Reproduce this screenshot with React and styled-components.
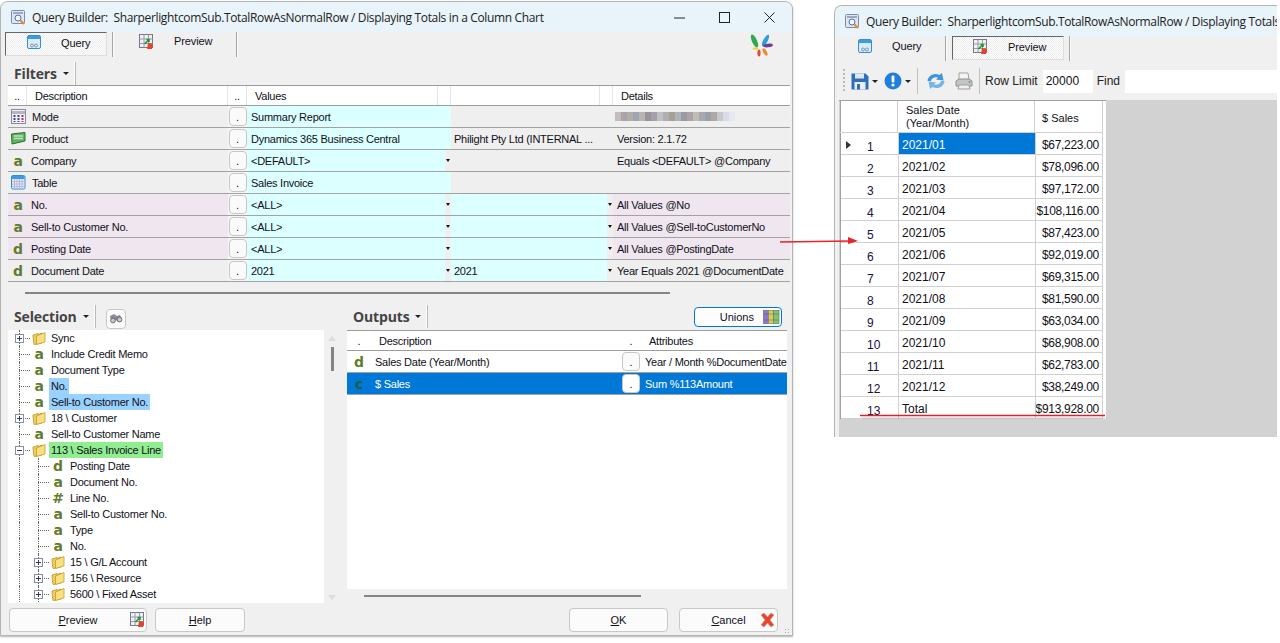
import styled, { createGlobalStyle } from "styled-components";

const GlobalStyle = createGlobalStyle`
  html, body {
    margin: 0;
    padding: 0;
    background: #fff;
    font-family: "Liberation Sans", Arial, sans-serif;
    font-size: 11px;
    letter-spacing: -0.25px;
    color: #101018;
  }
  svg {
    flex: none;
  }
`;

const Desktop = styled.div`
  position: relative;
  width: 1280px;
  height: 643px;
  overflow: hidden;
  background: #fff;
`;

const Window = styled.div`
  position: absolute;
  left: ${(p) => p.$left}px;
  top: ${(p) => p.$top}px;
  width: ${(p) => p.$width}px;
  height: ${(p) => p.$height}px;
  box-sizing: border-box;
  display: flex;
  flex-direction: column;
  overflow: hidden;
  background: #f0f0f0;
  border: 1px solid #b4b4b4;
  border-radius: 8px 8px 0 0;
  ${(p) =>
    p.$open
      ? "border-right: none; border-bottom: none; border-top-right-radius: 0;"
      : "box-shadow: 0 1px 2px rgba(0, 0, 0, 0.3);"}
`;

const TitleBar = styled.div`
  flex: none;
  height: 30px;
  display: flex;
  align-items: center;
  padding-left: 10px;
  background: #e8f4f9;
`;

const TitleText = styled.span`
  margin-left: 6px;
  font-family: "Open Sans", sans-serif;
  font-size: 12px;
  white-space: pre;
  color: #222;
  letter-spacing: -0.35px;
`;

const WindowControls = styled.div`
  margin-left: auto;
  display: flex;
  align-items: center;
  gap: 34px;
  padding-right: 17px;
`;

const TabStrip = styled.div`
  flex: none;
  height: 25px;
  display: flex;
  position: relative;
  padding-left: ${(p) => p.$pad}px;
`;

const Tab = styled.div`
  box-sizing: border-box;
  width: ${(p) => p.$width}px;
  height: 24px;
  display: flex;
  align-items: ${(p) => (p.$active ? "center" : "flex-start")};
  padding-left: ${(p) => p.$pad}px;
  padding-top: ${(p) => p.$top || 0}px;
  padding-bottom: ${(p) => (p.$active ? 4 : 0)}px;
  gap: ${(p) => p.$gap}px;
  ${(p) =>
    p.$active &&
    `
    border-top: 1px solid #666;
    border-left: 1px solid #666;
    border-right: 1px solid #ddd;
    border-bottom: 1px solid #ddd;
    background: repeating-conic-gradient(#fff 0 25%, #ececec 0 50%) 0 0 / 2px 2px;
  `}
`;

const TabLabel = styled.span`
  padding-top: ${(p) => (p.$active ? 2 : 1)}px;
  letter-spacing: -0.1px;
`;

const TabSep = styled.div`
  width: 1px;
  height: 25px;
  background: #a6a6a6;
  margin: 0 ${(p) => p.$right}px 0 ${(p) => p.$left}px;
  box-shadow: 1px 0 0 #fafafa;
`;

const LogoSlot = styled.div`
  position: absolute;
  right: 18px;
  top: 0;
`;

const SectionHeader = styled.div`
  flex: none;
  box-sizing: border-box;
  height: ${(p) => p.$height}px;
  margin-top: ${(p) => p.$top || 0}px;
  display: flex;
  align-items: center;
  padding-left: ${(p) => p.$pad || 13}px;
  padding-bottom: ${(p) => p.$lift || 0}px;
`;

const SectionTitle = styled.span`
  font-family: "Open Sans", sans-serif;
  font-size: 14px;
  font-weight: 700;
  letter-spacing: -0.15px;
  color: #444;
`;

const HeadCaret = styled.span`
  width: 0;
  height: 0;
  margin-left: 6px;
  border-left: 3px solid transparent;
  border-right: 3px solid transparent;
  border-top: 3px solid #222;
`;

const HeadSep = styled.span`
  width: 1px;
  height: 23px;
  margin-left: 6px;
  background: #b8b8b8;
  box-shadow: -1px 0 0 #fff;
`;

const FilterGrid = styled.div`
  flex: none;
  margin-left: 7px;
  width: 782px;
`;

const FilterHead = styled.div`
  display: grid;
  grid-template-columns: 19px 201px 19px 191px 13px 149px 13px 177px;
  height: 21px;
  box-sizing: border-box;
  border-top: 1px solid #9c9c9c;
  border-bottom: 1px solid #9c9c9c;
  background: #fff;
`;

const HeadCell = styled.div`
  box-sizing: border-box;
  display: flex;
  align-items: center;
  justify-content: ${(p) => (p.$center ? "center" : "flex-start")};
  padding-left: ${(p) => (p.$center ? 0 : 8)}px;
  border-right: 1px solid ${(p) => (p.$last ? "transparent" : "#e4e4e4")};
  white-space: nowrap;
  overflow: hidden;
`;

const FilterRow = styled.div`
  display: grid;
  grid-template-columns: 220px 19px 204px 162px 177px;
  height: 22px;
  box-sizing: border-box;
  border-bottom: 1px solid #a2a2a2;
  background: #efefef;
`;

const DescCell = styled.div`
  display: flex;
  align-items: center;
  padding-left: 3px;
  gap: 6px;
  background: ${(p) => (p.$pink ? "#f0e6f0" : "#efefef")};
  white-space: nowrap;
`;

const DotCell = styled.div`
  display: flex;
  justify-content: center;
  align-items: center;
  background: #f6f6f6;
`;

const DotButton = styled.div`
  box-sizing: border-box;
  width: 18px;
  height: 19px;
  display: flex;
  align-items: flex-end;
  justify-content: center;
  padding-bottom: 2px;
  line-height: 1;
  background: ${(p) => (p.$solid ? "#fff" : "#fafafa")};
  border: 1px solid #c6c6c6;
  border-radius: 4px;
`;

const ValueCell = styled.div`
  display: flex;
  align-items: center;
  padding-left: ${(p) => p.$pad}px;
  background: ${(p) => (p.$cyan ? "#dcffff" : "#efefef")};
  white-space: nowrap;
  overflow: hidden;
`;

const DropArrow = styled.span`
  align-self: stretch;
  margin-left: auto;
  width: 6px;
  display: flex;
  align-items: center;
  justify-content: center;
  background: #efefef;
  &::after {
    content: "";
    border-left: 2.5px solid transparent;
    border-right: 2.5px solid transparent;
    border-top: 3px solid #111;
  }
`;

const DetailCell = styled.div`
  display: flex;
  align-items: center;
  padding-left: 4px;
  background: ${(p) => (p.$pink ? "#f0e6f0" : "#efefef")};
  white-space: nowrap;
  overflow: hidden;
`;

const BlurStrip = styled.div`
  display: flex;
  margin-left: -2px;
`;

const BlurPixel = styled.span`
  width: 6px;
  height: 9px;
  background: ${(p) => p.$color};
`;

const TypeGlyph = styled.span`
  width: 14px;
  flex: none;
  text-align: center;
  font-family: "DejaVu Sans", sans-serif;
  font-weight: 700;
  font-size: 14px;
  line-height: 1;
  color: ${(p) => p.$color || "#5f7d2d"};
`;

const HLine = styled.div`
  flex: none;
  height: 2px;
  background: #858585;
  margin-left: ${(p) => p.$left}px;
  width: ${(p) => p.$width}px;
  margin-top: ${(p) => p.$top}px;
  margin-bottom: ${(p) => p.$bottom}px;
`;

const Panes = styled.div`
  flex: none;
  height: 302px;
  display: flex;
`;

const LeftPane = styled.div`
  flex: none;
  width: 346px;
  display: flex;
  flex-direction: column;
`;

const RightPane = styled.div`
  flex: none;
  width: 440px;
  display: flex;
  flex-direction: column;
`;

const TreeWrap = styled.div`
  display: flex;
  margin-left: 7px;
`;

const Tree = styled.div`
  box-sizing: border-box;
  width: 316px;
  height: 273px;
  padding-left: 2px;
  background: #fff;
  overflow: hidden;
`;

const TreeRow = styled.div`
  height: 16px;
  display: flex;
  align-items: center;
  white-space: nowrap;
`;

const Slot = styled.span`
  position: relative;
  flex: none;
  width: 19px;
  height: 16px;
  margin-right: ${(p) => (p.$end ? 3 : 0)}px;
  &::before {
    content: "";
    position: absolute;
    left: 9px;
    top: 0;
    bottom: 0;
    border-left: 1px dotted #666;
  }
  ${(p) =>
    p.$end &&
    `
    &::after {
      content: "";
      position: absolute;
      left: 9px;
      top: 8px;
      width: 11px;
      border-top: 1px dotted #666;
    }
  `}
`;

const Expander = styled.span`
  position: absolute;
  z-index: 1;
  left: 5px;
  top: 4px;
  width: 9px;
  height: 9px;
  box-sizing: border-box;
  border: 1px solid #8c8ca0;
  background: #fff;
  &::before {
    content: "";
    position: absolute;
    left: 1px;
    right: 1px;
    top: 3px;
    height: 1px;
    background: #2a3a80;
  }
  ${(p) =>
    p.$plus &&
    `
    &::after {
      content: "";
      position: absolute;
      top: 1px;
      bottom: 1px;
      left: 3px;
      width: 1px;
      background: #2a3a80;
    }
  `}
`;

const TreeLabel = styled.span`
  margin-left: 3px;
  padding: 0 2px;
  height: 16px;
  line-height: 16px;
  background: ${(p) => p.$hl || "transparent"};
`;

const TreeScroll = styled.div`
  flex: none;
  width: 16px;
  height: 272px;
  position: relative;
  display: flex;
  flex-direction: column;
  align-items: center;
  justify-content: space-between;
  padding: 6px 0 2px;
  box-sizing: border-box;
`;

const ScrollArrow = styled.span`
  border-left: 4px solid transparent;
  border-right: 4px solid transparent;
  ${(p) => (p.$up ? "border-bottom: 5px solid #dcdcdc;" : "border-top: 5px solid #dcdcdc;")}
`;

const ScrollThumb = styled.span`
  position: absolute;
  top: 17px;
  left: 7px;
  width: 3px;
  height: 24px;
  background: #858585;
`;

const BinocularButton = styled.div`
  box-sizing: border-box;
  width: 20px;
  height: 20px;
  margin-left: 10px;
  margin-top: 5px;
  display: flex;
  align-items: center;
  justify-content: center;
  background: #fbfbfb;
  border: 1px solid #c8c8c8;
  border-radius: 4px;
`;

const UnionsButton = styled.div`
  box-sizing: border-box;
  width: 88px;
  height: 20px;
  margin-left: auto;
  margin-right: 5px;
  display: flex;
  align-items: center;
  justify-content: flex-end;
  gap: 9px;
  padding-right: 1px;
  letter-spacing: 0;
  background: #fdfdfd;
  border: 1px solid #0078d7;
  border-radius: 4px;
`;

const OutputPanel = styled.div`
  height: 259px;
  background: #fff;
  overflow: hidden;
`;

const OutputHead = styled.div`
  display: grid;
  grid-template-columns: 24px 250px 20px 146px;
  height: 21px;
  box-sizing: border-box;
  border-top: 1px solid #9c9c9c;
  border-bottom: 1px solid #9c9c9c;
`;

const OutputRow = styled.div`
  display: grid;
  grid-template-columns: 24px 250px 20px 146px;
  height: 22px;
  box-sizing: border-box;
  border-bottom: 1px solid #a2a2a2;
  color: ${(p) => (p.$selected ? "#fff" : "inherit")};
  background: ${(p) => (p.$selected ? "#0078d7" : "#fff")};
`;

const OutputCell = styled.div`
  display: flex;
  align-items: center;
  justify-content: ${(p) => (p.$center ? "center" : "flex-start")};
  padding-left: ${(p) => p.$pad || 0}px;
  white-space: nowrap;
  overflow: hidden;
  color: ${(p) => p.$ink || "inherit"};
`;

const Footer = styled.div`
  flex: none;
  display: flex;
  padding: 0 14px 0 8px;
  position: relative;
  letter-spacing: 0;
`;

const FootButton = styled.div`
  box-sizing: border-box;
  position: relative;
  width: ${(p) => p.$width}px;
  height: 24px;
  margin-left: ${(p) => p.$gap || 0}px;
  display: flex;
  align-items: center;
  justify-content: center;
  background: #fbfbfb;
  border: 1px solid #c8c8c8;
  border-radius: 4px;
`;

const ButtonIcon = styled.span`
  position: absolute;
  right: ${(p) => p.$right}px;
  top: 3px;
  line-height: 0;
`;

const ResizeGrip = styled.span`
  position: absolute;
  right: 1px;
  bottom: -3px;
  width: 7px;
  height: 7px;
  background: radial-gradient(circle, #a8a8a8 1px, transparent 1px) 0 0 / 3px 3px;
`;

const Toolbar = styled.div`
  flex: none;
  height: 30px;
  margin-top: 5px;
  display: flex;
  align-items: center;
  padding-left: 8px;
  letter-spacing: 0;
`;

const ToolGrip = styled.span`
  width: 2px;
  height: 24px;
  margin-right: 6px;
  background: repeating-linear-gradient(#bbb 0 2px, transparent 2px 4px);
`;

const ToolCaret = styled.span`
  margin: 0 ${(p) => p.$right}px 0 3px;
  border-left: 3px solid transparent;
  border-right: 3px solid transparent;
  border-top: 3px solid #222;
`;

const ToolSep = styled.span`
  width: 1px;
  height: 26px;
  margin: 0 ${(p) => p.$right}px 0 ${(p) => p.$left}px;
  background: #c0c0c0;
`;

const ToolSpacer = styled.span`
  width: ${(p) => p.$width}px;
`;

const ToolText = styled.span`
  font-size: 12px;
  margin-right: ${(p) => p.$right}px;
  color: #222;
`;

const ToolInput = styled.div`
  box-sizing: border-box;
  height: 23px;
  width: ${(p) => p.$width}px;
  flex: ${(p) => (p.$grow ? 1 : "none")};
  margin-right: ${(p) => (p.$grow ? 0 : 4)}px;
  padding-left: 3px;
  display: flex;
  align-items: center;
  font-size: 12px;
  background: #fff;
`;

const GridArea = styled.div`
  flex: 1;
  margin-top: 4px;
  margin-left: 4px;
  background: #d2d2d2;
`;

const DataGrid = styled.div`
  width: 265px;
  background: #fff;
  border-left: 1px solid #a0a0a0;
  margin-left: 1px;
`;

const DataHead = styled.div`
  display: grid;
  grid-template-columns: 59px 137px 68px;
  height: 33px;
  box-sizing: border-box;
  border-top: 1px solid #a0a0a0;
  margin-left: -2px;
`;

const DataHeadCell = styled.div`
  box-sizing: border-box;
  display: flex;
  align-items: center;
  padding-left: ${(p) => p.$pad}px;
  padding-top: ${(p) => p.$down || 0}px;
  line-height: 13px;
  letter-spacing: 0;
  border-right: 1px solid #d0d0d0;
  border-bottom: 1px solid #d0d0d0;
`;

const DataRow = styled.div`
  display: grid;
  grid-template-columns: 58px 137px 67px;
  height: 22px;
  box-sizing: border-box;
`;

const RowHeader = styled.div`
  box-sizing: border-box;
  position: relative;
  padding: 8px 0 0 26px;
  line-height: 13px;
  letter-spacing: 0;
  border-right: 1px solid #d0d0d0;
  border-bottom: 1px solid #d0d0d0;
  font-size: 12px;
  color: #201040;
`;

const RowMarker = styled.span`
  position: absolute;
  left: 5px;
  top: 8px;
  border-top: 4px solid transparent;
  border-bottom: 4px solid transparent;
  border-left: 5px solid #333;
`;

const DataCell = styled.div`
  box-sizing: border-box;
  display: flex;
  align-items: center;
  justify-content: ${(p) => (p.$right ? "flex-end" : "flex-start")};
  padding: 2px 3px 0 3px;
  letter-spacing: ${(p) => (p.$right ? -0.3 : 0)}px;
  border-right: 1px solid #d0d0d0;
  border-bottom: 1px solid #d0d0d0;
  background: ${(p) => (p.$selected ? "#0078d7" : "#fff")};
  color: ${(p) => (p.$selected ? "#fff" : "inherit")};
  font-size: 12px;
`;

const Annotation = styled.svg`
  position: absolute;
  left: 0;
  top: 0;
  pointer-events: none;
`;

/* drawings */

const QueryAppIcon = () => (
  <svg width="15" height="15" viewBox="0 0 15 15">
    <rect x="0.5" y="0.5" width="13" height="13" rx="1" fill="#dfe6f2" stroke="#7f8aa8" />
    <rect x="2" y="2" width="10" height="2" fill="#9aa9c9" />
    <circle cx="7" cy="8" r="3" fill="#eef6ff" stroke="#5a6f9c" />
    <path d="M9.5 10.5 13 14" stroke="#e08a30" strokeWidth="2" />
  </svg>
);

const QueryTabIcon = () => (
  <svg width="15" height="15" viewBox="0 0 15 15">
    <rect x="0.5" y="0.5" width="13" height="13" rx="1.5" fill="#d8ecfb" stroke="#2f8fdc" />
    <rect x="1" y="1" width="12" height="3" fill="#3d9be3" />
    <circle cx="5" cy="10.500" r="1.500" fill="none" stroke="#7a95b0" />
    <circle cx="9" cy="10.500" r="1.500" fill="none" stroke="#7a95b0" />
  </svg>
);

const PreviewIcon = () => (
  <svg width="15" height="15" viewBox="0 0 15 15">
    <rect x="0.5" y="0.5" width="13" height="13" fill="#f0f0f4" stroke="#77778a" />
    <path d="M0.5 5h13M0.5 9.500h13M5 0.500v13M9.500 0.500v13" stroke="#9a9aaa" />
    <path d="M9 9l5 1-1 5H8z" fill="#e2452a" />
    <path d="M5.500 10 10 5.500M7.500 5.500H10V8" stroke="#1e9a2e" strokeWidth="1.600" fill="none" />
  </svg>
);

const ModeIcon = () => (
  <svg width="15" height="15" viewBox="0 0 15 15">
    <rect x="0.5" y="0.5" width="14" height="14" fill="#f2f2f6" stroke="#8a8a9c" />
    <path d="M1 3.500h13" stroke="#b4b4c4" strokeWidth="3" />
    <path d="M3.500 6v7M7.500 6v7" stroke="#3a4a8a" strokeWidth="2" strokeDasharray="2 1" />
    <path d="M11.500 6v7" stroke="#a03a5a" strokeWidth="2" strokeDasharray="2 1" />
  </svg>
);

const ProductIcon = () => (
  <svg width="15" height="15" viewBox="0 0 15 15">
    <path d="M0.500 3 14 1.500V10L1 13z" fill="#5cb85c" stroke="#2e6e2e" />
    <path d="M3 5h9M3 7.500h9" stroke="#c8d8c8" strokeWidth="1.400" />
  </svg>
);

const TableIcon = () => (
  <svg width="15" height="15" viewBox="0 0 15 15">
    <rect x="0.5" y="0.5" width="13.500" height="13.500" rx="1.500" fill="#e9e9f6" stroke="#2f8fdc" />
    <rect x="1" y="1" width="12.500" height="3" fill="#3d9be3" />
    <path d="M1 6.500h13M1 9h13M1 11.500h13M3.500 4v10M6 4v10M8.500 4v10M11 4v10" stroke="#b8b8d8" />
  </svg>
);

const FolderIcon = () => (
  <svg width="14" height="14" viewBox="0 0 14 14">
    <path d="M1 5 2 13.500 10 12V2L6 3.500V2.500L1 4z" fill="#f1cd5c" stroke="#b99628" strokeWidth="0.8" />
    <path d="M4.500 5 13 1.500V11L4.500 13.500z" fill="#f8df80" stroke="#c09c30" strokeWidth="0.8" />
  </svg>
);

const BinocularsIcon = () => (
  <svg width="14" height="12" viewBox="0 0 14 12">
    <path d="M1 3 5 1l3 2 3-1 2 4-3 3-3-2-2 2-3-1z" fill="#8c8c96" />
    <ellipse cx="4" cy="7.500" rx="2.400" ry="2.400" fill="#c8c8d0" stroke="#55555f" strokeWidth="0.8" />
    <ellipse cx="10.500" cy="6.500" rx="2.400" ry="2.400" fill="#c8c8d0" stroke="#55555f" strokeWidth="0.8" />
  </svg>
);

const UnionsIcon = () => (
  <svg width="17" height="15" viewBox="0 0 17 15">
    <rect x="0.5" y="1.500" width="5" height="13" fill="#8a78c8" stroke="#6a6a90" strokeWidth="0.7" />
    <rect x="5.500" y="1.500" width="5" height="13" fill="#d8c868" stroke="#8a8a50" strokeWidth="0.7" />
    <rect x="10.500" y="1.500" width="5.500" height="13" fill="#88c070" stroke="#5e8a50" strokeWidth="0.7" />
    <path d="M1 5h15M1 11h15" stroke="#4a4a4a" strokeWidth="0.6" opacity="0.6" />
  </svg>
);

const Logo = () => (
  <svg width="24" height="26" viewBox="0 0 24 26">
    <ellipse cx="4.500" cy="9" rx="2.500" ry="7" transform="rotate(-24 4.500 9)" fill="#2fa84f" />
    <ellipse cx="15.500" cy="8.500" rx="2.200" ry="6.500" transform="rotate(28 15.500 8.500)" fill="#2a9fd8" />
    <ellipse cx="18" cy="13.500" rx="5" ry="1.800" transform="rotate(-6 18 13.500)" fill="#6b3fa0" />
    <ellipse cx="15" cy="20" rx="1.800" ry="4" transform="rotate(-28 15 20)" fill="#f08a30" />
    <ellipse cx="9" cy="21" rx="1.600" ry="3.400" fill="#e8483c" />
    <ellipse cx="5.500" cy="16.500" rx="3" ry="1.300" fill="#f4d23c" />
  </svg>
);

const CloseRedIcon = () => (
  <svg width="15" height="16" viewBox="0 0 15 16">
    <path d="M1 3 4 1l3.500 4L11 1l3 2-4 5 4 5-3 2-3.500-4L4 15l-3-2 4-5z" fill="#e8452c" stroke="#c8a08c" strokeWidth="0.7" />
  </svg>
);

const SaveIcon = () => (
  <svg width="18" height="18" viewBox="0 0 18 18">
    <path d="M0.500 1.500h14l3 3v13H0.500z" fill="#2f6fb8" />
    <rect x="4" y="1.500" width="9" height="5" fill="#dfe8f4" />
    <rect x="3.500" y="10" width="11" height="7.500" fill="#e9eef6" />
    <rect x="6" y="12" width="3" height="5.500" fill="#2f6fb8" />
  </svg>
);

const InfoIcon = () => (
  <svg width="18" height="18" viewBox="0 0 18 18">
    <circle cx="9" cy="9" r="8.500" fill="#1f7fdc" />
    <rect x="7.600" y="3.500" width="2.800" height="7" rx="1" fill="#fff" />
    <circle cx="9" cy="13" r="1.600" fill="#fff" />
  </svg>
);

const RefreshIcon = () => (
  <svg width="18" height="18" viewBox="0 0 18 18">
    <path d="M0.500 9C1 3.500 7 0 12.500 3L15 1l1.500 7.500-7.500-1L11 5.500C8 4.500 4.500 6 4 9z" fill="#3f94dc" />
    <path d="M17.500 9C17 14.500 11 18 5.500 15L3 17 1.500 9.500l7.500 1L7 12.500c3 1 6.500-.5 7-3.500z" fill="#72b4e8" />
  </svg>
);

const PrintIcon = () => (
  <svg width="18" height="18" viewBox="0 0 18 18">
    <path d="M4 1h9l1 7H4z" fill="#f4f4f4" stroke="#a0a0a0" />
    <path d="M1 9l3-2h10l3 2v5H1z" fill="#c4c4c4" stroke="#909090" />
    <path d="M4 13h10l1 4H3z" fill="#eee" stroke="#a0a0a0" />
    <circle cx="14.500" cy="10" r="0.9" fill="#4ab04a" />
  </svg>
);

const Minimize = () => (
  <svg width="11" height="11" viewBox="0 0 11 11">
    <path d="M0 6h11" stroke="#222" />
  </svg>
);

const Maximize = () => (
  <svg width="11" height="11" viewBox="0 0 11 11">
    <rect x="0.5" y="0.5" width="10" height="10" fill="none" stroke="#222" />
  </svg>
);

const CloseX = () => (
  <svg width="11" height="11" viewBox="0 0 11 11">
    <path d="M0.500 0.500 10.500 10.500M10.500 0.500 0.500 10.500" stroke="#222" />
  </svg>
);

/* data */

const TITLE =
  "Query Builder:  SharperlightcomSub.TotalRowAsNormalRow / Displaying Totals in a Column Chart";

const filters = [
  { icon: <ModeIcon />, name: "Mode", value: "Summary Report", blur: true },
  {
    icon: <ProductIcon />,
    name: "Product",
    value: "Dynamics 365 Business Central",
    second: "Philight Pty Ltd (INTERNAL ...",
    details: "Version: 2.1.72",
  },
  {
    icon: <TypeGlyph>a</TypeGlyph>,
    name: "Company",
    value: "<DEFAULT>",
    drop: true,
    details: "Equals <DEFAULT> @Company",
  },
  { icon: <TableIcon />, name: "Table", value: "Sales Invoice" },
  {
    icon: <TypeGlyph>a</TypeGlyph>,
    name: "No.",
    value: "<ALL>",
    drop: true,
    pink: true,
    range: true,
    details: "All Values @No",
  },
  {
    icon: <TypeGlyph>a</TypeGlyph>,
    name: "Sell-to Customer No.",
    value: "<ALL>",
    drop: true,
    pink: true,
    range: true,
    details: "All Values @Sell-toCustomerNo",
  },
  {
    icon: <TypeGlyph>d</TypeGlyph>,
    name: "Posting Date",
    value: "<ALL>",
    drop: true,
    pink: true,
    range: true,
    details: "All Values @PostingDate",
  },
  {
    icon: <TypeGlyph>d</TypeGlyph>,
    name: "Document Date",
    value: "2021",
    drop: true,
    range: true,
    second: "2021",
    details: "Year Equals 2021 @DocumentDate",
  },
];

const blurColors = [
  "#c4bcbc", "#a8a4ac", "#b4aca8", "#a0a4b0", "#b8b4b4", "#98949c", "#a4a0a8",
  "#c0c0c4", "#b0b0b4", "#a8a098", "#b0b4b8", "#9c98a4", "#a8a4a8", "#c0bcb8",
  "#a8a8b0", "#98a0a8", "#b0a8a4", "#c8c8cc", "#d8dce8", "#e4e8f0",
];

const tree = [
  { level: 0, kind: "folder", label: "Sync", exp: "+" },
  { level: 0, kind: "a", label: "Include Credit Memo" },
  { level: 0, kind: "a", label: "Document Type" },
  { level: 0, kind: "a", label: "No.", hl: "#99d1ff" },
  { level: 0, kind: "a", label: "Sell-to Customer No.", hl: "#99d1ff" },
  { level: 0, kind: "folder", label: "18 \\ Customer", exp: "+" },
  { level: 0, kind: "a", label: "Sell-to Customer Name" },
  { level: 0, kind: "folder", label: "113 \\ Sales Invoice Line", exp: "-", hl: "#90ee90" },
  { level: 1, kind: "d", label: "Posting Date" },
  { level: 1, kind: "a", label: "Document No." },
  { level: 1, kind: "#", label: "Line No." },
  { level: 1, kind: "a", label: "Sell-to Customer No." },
  { level: 1, kind: "a", label: "Type" },
  { level: 1, kind: "a", label: "No." },
  { level: 1, kind: "folder", label: "15 \\ G/L Account", exp: "+" },
  { level: 1, kind: "folder", label: "156 \\ Resource", exp: "+" },
  { level: 1, kind: "folder", label: "5600 \\ Fixed Asset", exp: "+" },
];

const sales = [
  ["2021/01", "$67,223.00"],
  ["2021/02", "$78,096.00"],
  ["2021/03", "$97,172.00"],
  ["2021/04", "$108,116.00"],
  ["2021/05", "$87,423.00"],
  ["2021/06", "$92,019.00"],
  ["2021/07", "$69,315.00"],
  ["2021/08", "$81,590.00"],
  ["2021/09", "$63,034.00"],
  ["2021/10", "$68,908.00"],
  ["2021/11", "$62,783.00"],
  ["2021/12", "$38,249.00"],
  ["Total", "$913,928.00"],
];

function TreeItem({ item }) {
  const slots = [];
  for (let i = 0; i <= item.level; i++) {
    const end = i === item.level;
    slots.push(
      <Slot key={i} $end={end}>
        {end && item.exp && <Expander $plus={item.exp === "+"} />}
      </Slot>
    );
  }
  return (
    <TreeRow>
      {slots}
      {item.kind === "folder" ? <FolderIcon /> : <TypeGlyph>{item.kind}</TypeGlyph>}
      <TreeLabel $hl={item.hl}>{item.label}</TreeLabel>
    </TreeRow>
  );
}

function FilterLine({ row }) {
  return (
    <FilterRow>
      <DescCell $pink={row.pink}>
        {row.icon}
        {row.name}
      </DescCell>
      <DotCell>
        <DotButton>.</DotButton>
      </DotCell>
      <ValueCell $cyan $pad={4}>
        {row.value}
        {row.drop && <DropArrow />}
      </ValueCell>
      <ValueCell $cyan={row.range} $pad={3}>
        {row.second}
        {row.range && <DropArrow />}
      </ValueCell>
      <DetailCell $pink={row.pink}>
        {row.blur ? (
          <BlurStrip>
            {blurColors.map((c, i) => (
              <BlurPixel key={i} $color={c} />
            ))}
          </BlurStrip>
        ) : (
          row.details
        )}
      </DetailCell>
    </FilterRow>
  );
}

function QueryWindow() {
  return (
    <Window $left={0} $top={1} $width={793} $height={635}>
      <TitleBar>
        <QueryAppIcon />
        <TitleText>{TITLE}</TitleText>
        <WindowControls>
          <Minimize />
          <Maximize />
          <CloseX />
        </WindowControls>
      </TitleBar>
      <TabStrip $pad={4}>
        <Tab $active $width={102} $pad={21} $gap={19}>
          <QueryTabIcon />
          <TabLabel $active>Query</TabLabel>
        </Tab>
        <TabSep $left={5} $right={0} />
        <Tab $width={123} $pad={26} $gap={20} $top={2}>
          <PreviewIcon />
          <TabLabel>Preview</TabLabel>
        </Tab>
        <TabSep $left={0} $right={0} />
        <LogoSlot>
          <Logo />
        </LogoSlot>
      </TabStrip>
      <SectionHeader $top={5} $height={23}>
        <SectionTitle>Filters</SectionTitle>
        <HeadCaret />
        <HeadSep />
      </SectionHeader>
      <FilterGrid>
        <FilterHead>
          <HeadCell $center>..</HeadCell>
          <HeadCell>Description</HeadCell>
          <HeadCell $center>..</HeadCell>
          <HeadCell>Values</HeadCell>
          <HeadCell />
          <HeadCell />
          <HeadCell />
          <HeadCell $last>Details</HeadCell>
        </FilterHead>
        {filters.map((row) => (
          <FilterLine key={row.name} row={row} />
        ))}
      </FilterGrid>
      <HLine $left={24} $width={645} $top={10} $bottom={12} />
      <Panes>
        <LeftPane>
          <SectionHeader $height={24} $lift={3}>
            <SectionTitle>Selection</SectionTitle>
            <HeadCaret />
            <HeadSep />
            <BinocularButton>
              <BinocularsIcon />
            </BinocularButton>
          </SectionHeader>
          <TreeWrap>
            <Tree>
              {tree.map((item, i) => (
                <TreeItem key={i} item={item} />
              ))}
            </Tree>
            <TreeScroll>
              <ScrollArrow $up />
              <ScrollThumb />
              <ScrollArrow />
            </TreeScroll>
          </TreeWrap>
        </LeftPane>
        <RightPane>
          <SectionHeader $height={24} $lift={3} $pad={6}>
            <SectionTitle>Outputs</SectionTitle>
            <HeadCaret />
            <HeadSep />
            <UnionsButton>
              Unions
              <UnionsIcon />
            </UnionsButton>
          </SectionHeader>
          <OutputPanel>
            <OutputHead>
              <OutputCell $center>.</OutputCell>
              <OutputCell $pad={8}>Description</OutputCell>
              <OutputCell $center>.</OutputCell>
              <OutputCell $pad={8}>Attributes</OutputCell>
            </OutputHead>
            <OutputRow>
              <OutputCell $center>
                <TypeGlyph>d</TypeGlyph>
              </OutputCell>
              <OutputCell $pad={4}>Sales Date (Year/Month)</OutputCell>
              <OutputCell $center>
                <DotButton>.</DotButton>
              </OutputCell>
              <OutputCell $pad={4}>Year / Month %DocumentDate</OutputCell>
            </OutputRow>
            <OutputRow $selected>
              <OutputCell $center>
                <TypeGlyph $color="#1f5f45">c</TypeGlyph>
              </OutputCell>
              <OutputCell $pad={4}>$ Sales</OutputCell>
              <OutputCell $center $ink="#111">
                <DotButton $solid>.</DotButton>
              </OutputCell>
              <OutputCell $pad={4}>Sum %113Amount</OutputCell>
            </OutputRow>
          </OutputPanel>
          <HLine $left={17} $width={277} $top={6} $bottom={0} />
        </RightPane>
      </Panes>
      <Footer>
        <FootButton $width={138}>
          <span>
            <u>P</u>review
          </span>
          <ButtonIcon $right={1}>
            <PreviewIcon />
          </ButtonIcon>
        </FootButton>
        <FootButton $width={90} $gap={8}>
          <span>
            <u>H</u>elp
          </span>
        </FootButton>
        <FootButton $width={99} $gap={324}>
          <span>
            <u>O</u>K
          </span>
        </FootButton>
        <FootButton $width={99} $gap={11}>
          <span>
            <u>C</u>ancel
          </span>
          <ButtonIcon $right={2}>
            <CloseRedIcon />
          </ButtonIcon>
        </FootButton>
        <ResizeGrip />
      </Footer>
    </Window>
  );
}

function PreviewWindow() {
  return (
    <Window $open $left={834} $top={5} $width={443} $height={432}>
      <TitleBar>
        <QueryAppIcon />
        <TitleText>{TITLE}</TitleText>
      </TitleBar>
      <TabStrip $pad={5}>
        <Tab $width={105} $pad={18} $gap={19} $top={3}>
          <QueryTabIcon />
          <TabLabel>Query</TabLabel>
        </Tab>
        <TabSep $left={0} $right={6} />
        <Tab $active $width={112} $pad={20} $gap={20}>
          <PreviewIcon />
          <TabLabel $active>Preview</TabLabel>
        </Tab>
        <TabSep $left={5} $right={0} />
      </TabStrip>
      <Toolbar>
        <ToolGrip />
        <SaveIcon />
        <ToolCaret $right={6} />
        <InfoIcon />
        <ToolCaret $right={0} />
        <ToolSep $left={6} $right={9} />
        <RefreshIcon />
        <ToolSpacer $width={10} />
        <PrintIcon />
        <ToolSep $left={6} $right={5} />
        <ToolText $right={5}>Row Limit</ToolText>
        <ToolInput $width={50}>20000</ToolInput>
        <ToolText $right={5}>Find</ToolText>
        <ToolInput $grow />
      </Toolbar>
      <GridArea>
        <DataGrid>
          <DataHead>
            <DataHeadCell $pad={0} />
            <DataHeadCell $pad={8}>
              Sales Date
              <br />
              (Year/Month)
            </DataHeadCell>
            <DataHeadCell $pad={7} $down={3}>
              $ Sales
            </DataHeadCell>
          </DataHead>
          {sales.map(([label, amount], i) => (
            <DataRow key={label}>
              <RowHeader>
                {i === 0 && <RowMarker />}
                {i + 1}
              </RowHeader>
              <DataCell $selected={i === 0}>{label}</DataCell>
              <DataCell $right>{amount}</DataCell>
            </DataRow>
          ))}
        </DataGrid>
      </GridArea>
    </Window>
  );
}

export default function App() {
  return (
    <Desktop>
      <GlobalStyle />
      <QueryWindow />
      <PreviewWindow />
      <Annotation width="1280" height="643">
        <path d="M780 242 L850 241" stroke="#e8232a" strokeWidth="1.5" />
        <path d="M848 237 L858 241 L848 244z" fill="#e8232a" />
        <path d="M860 415.500 L1105 415.500" stroke="#d8232a" strokeWidth="1.5" />
        <path d="M862 418 L1107 418" stroke="#888" strokeWidth="1" opacity="0.35" />
      </Annotation>
    </Desktop>
  );
}
